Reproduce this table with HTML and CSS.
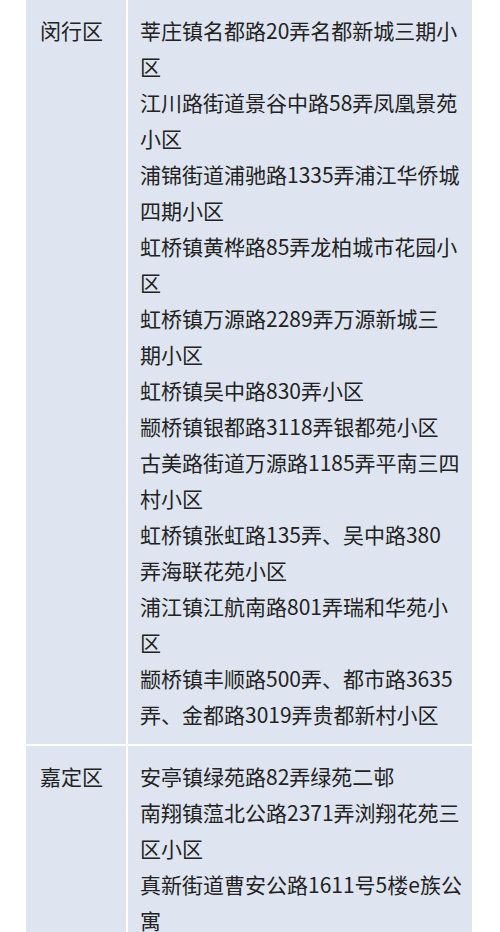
FILE: index.html
```html
<!DOCTYPE html>
<html lang="zh-CN">
<head>
    <meta charset="UTF-8">
    <meta name="viewport" content="width=device-width, initial-scale=1.0">
    <title>小区名单</title>
    <link rel="stylesheet" href="styles.css">
</head>
<body>
    <div class="area-table">
        <div class="district">闵行区</div>
        <div class="places">
            <p>莘庄镇名都路20弄名都新城三期小<br>区</p>
            <p>江川路街道景谷中路58弄凤凰景苑<br>小区</p>
            <p>浦锦街道浦驰路1335弄浦江华侨城<br>四期小区</p>
            <p>虹桥镇黄桦路85弄龙柏城市花园小<br>区</p>
            <p>虹桥镇万源路2289弄万源新城三<br>期小区</p>
            <p>虹桥镇吴中路830弄小区</p>
            <p>颛桥镇银都路3118弄银都苑小区</p>
            <p>古美路街道万源路1185弄平南三四<br>村小区</p>
            <p>虹桥镇张虹路135弄、吴中路380<br>弄海联花苑小区</p>
            <p>浦江镇江航南路801弄瑞和华苑小<br>区</p>
            <p>颛桥镇丰顺路500弄、都市路3635<br>弄、金都路3019弄贵都新村小区</p>
        </div>

        <div class="district">嘉定区</div>
        <div class="places">
            <p>安亭镇绿苑路82弄绿苑二邨</p>
            <p>南翔镇蕰北公路2371弄浏翔花苑三<br>区小区</p>
            <p>真新街道曹安公路1611号5楼e族公<br>寓</p>
        </div>
    </div>
</body>
</html>
```

FILE: styles.css
```css
body {
    margin: 0;
    background-color: #fff;
    color: #222;
    font-family: "Noto Sans CJK SC", "Noto Sans", sans-serif;
    font-size: 21px;
    line-height: 36px;
}
.area-table {
    display: grid;
    grid-template-columns: 100px 344px;
    gap: 2px;
    width: 446px;
    margin-left: 26px;
    background-color: #fff;
}
.district,
.places {
    background-color: #dee5f0;
    padding: 12px 12px;
}
.district {
    padding-left: 14px;
}
.places p {
    margin: 0;
    white-space: nowrap;
}
```
